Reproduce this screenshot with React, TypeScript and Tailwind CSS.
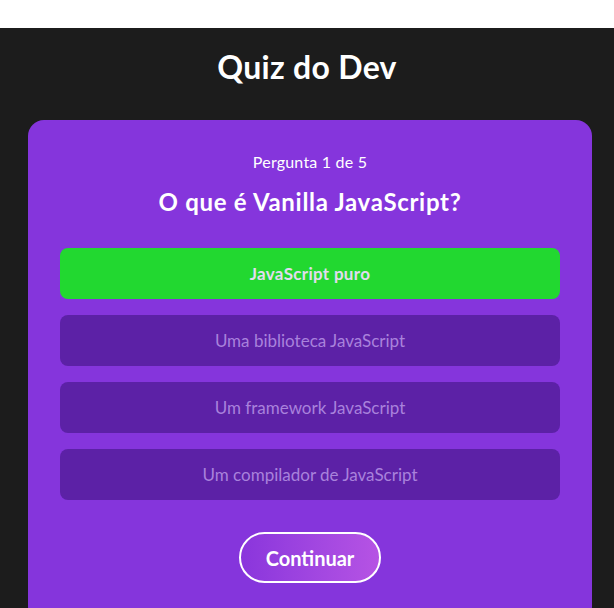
const options = [
  "JavaScript puro",
  "Uma biblioteca JavaScript",
  "Um framework JavaScript",
  "Um compilador de JavaScript",
];

export default function App() {
  const selected = 0;

  return (
    <div
      className="min-h-screen bg-white pt-[28px]"
      style={{ fontFamily: "Lato, 'Open Sans', sans-serif" }}
    >
      <main className="bg-[#1c1c1c] pb-10 min-h-[580px]">
        <h1 className="pt-[20px] text-center text-[32px] leading-[38px] font-bold text-white tracking-[0.3px]">
          Quiz do Dev
        </h1>

        <section className="ml-[28px] mt-[34px] w-[564px] rounded-[16px] bg-[#8535dc] px-8 pt-[30px] pb-10">
          <p className="text-center text-[16px] leading-6 text-white tracking-[0.2px]">Pergunta 1 de 5</p>
          <h2 className="mt-[13px] text-center text-[24px] leading-[30px] font-bold text-white tracking-[0.7px]">
            O que é Vanilla JavaScript?
          </h2>

          <div className="mt-[31px] flex flex-col gap-4">
            {options.map((opt, i) => (
              <button
                key={opt}
                className={
                  i === selected
                    ? "h-[51px] w-full rounded-lg bg-[#22d830] text-[17px] font-bold tracking-[0.3px] text-[#e2dcef]"
                    : "h-[51px] w-full rounded-lg bg-[#5c21a6] text-[17px] text-[#a982dc]"
                }
              >
                {opt}
              </button>
            ))}
          </div>

          <button className="mx-auto mt-[32px] flex h-[51px] w-[142px] items-center justify-center rounded-full border-2 border-white bg-gradient-to-r from-[#8a35dc] to-[#b653e4] text-[20px] font-bold text-white">
            Continuar
          </button>
        </section>
      </main>
    </div>
  );
}
